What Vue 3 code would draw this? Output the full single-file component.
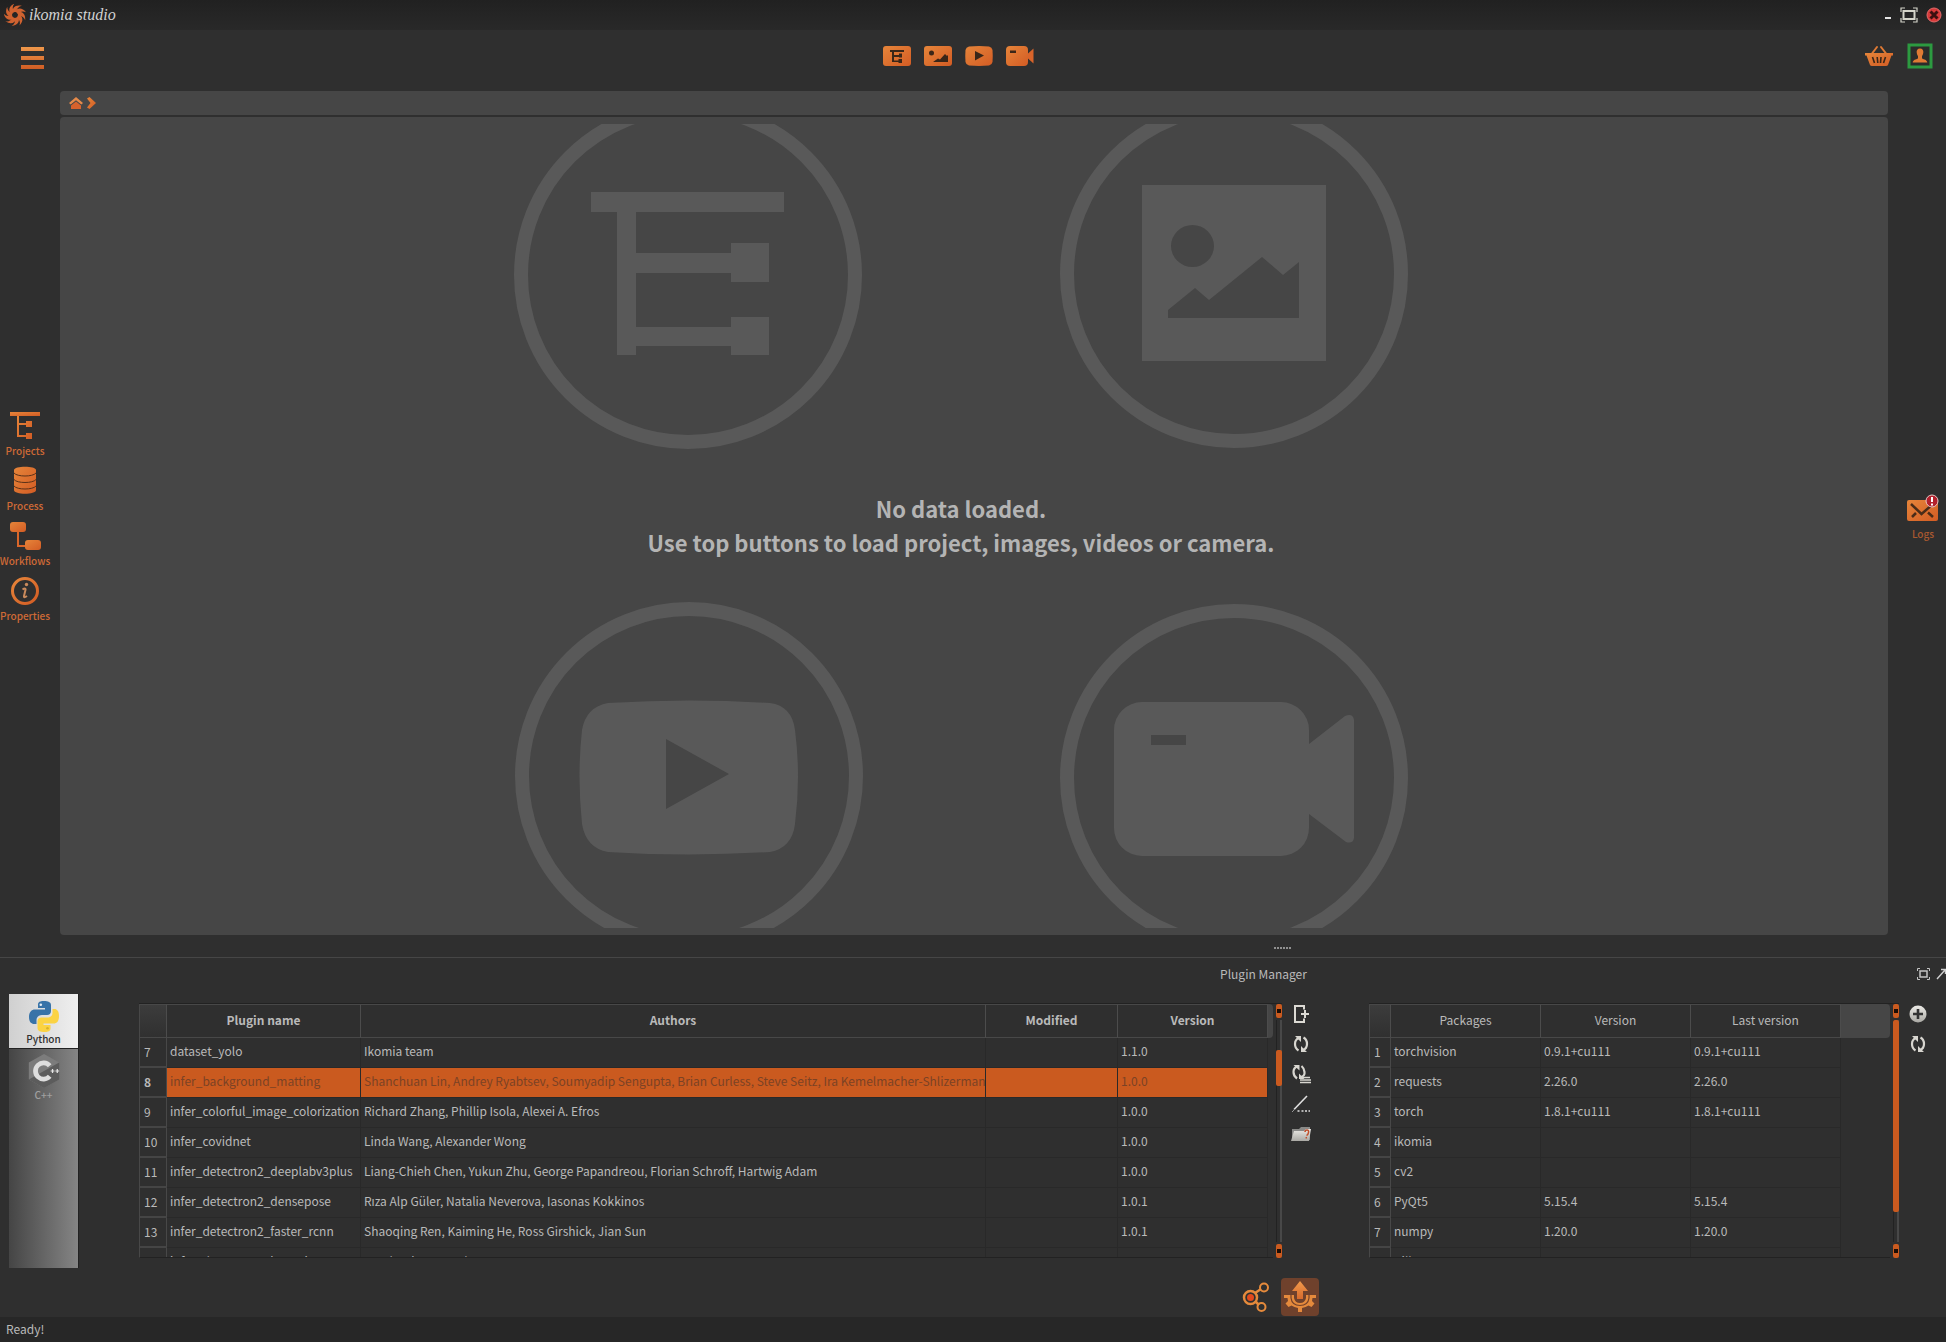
<script setup>
const loaders = [
  { id: 'project', label: 'Load project' },
  { id: 'image', label: 'Load images' },
  { id: 'video', label: 'Load videos' },
  { id: 'camera', label: 'Open camera' },
]

const docks = [
  { id: 'projects', label: 'Projects' },
  { id: 'process', label: 'Process' },
  { id: 'workflows', label: 'Workflows' },
  { id: 'properties', label: 'Properties' },
]

const plugins = [
  { n: 7, name: 'dataset_yolo', authors: 'Ikomia team', version: '1.1.0' },
  { n: 8, name: 'infer_background_matting', authors: 'Shanchuan Lin, Andrey Ryabtsev, Soumyadip Sengupta, Brian Curless, Steve Seitz, Ira Kemelmacher-Shlizerman', version: '1.0.0', selected: true },
  { n: 9, name: 'infer_colorful_image_colorization', authors: 'Richard Zhang, Phillip Isola, Alexei A. Efros', version: '1.0.0' },
  { n: 10, name: 'infer_covidnet', authors: 'Linda Wang, Alexander Wong', version: '1.0.0' },
  { n: 11, name: 'infer_detectron2_deeplabv3plus', authors: 'Liang-Chieh Chen, Yukun Zhu, George Papandreou, Florian Schroff, Hartwig Adam', version: '1.0.0' },
  { n: 12, name: 'infer_detectron2_densepose', authors: 'Rıza Alp Güler, Natalia Neverova, Iasonas Kokkinos', version: '1.0.1' },
  { n: 13, name: 'infer_detectron2_faster_rcnn', authors: 'Shaoqing Ren, Kaiming He, Ross Girshick, Jian Sun', version: '1.0.1' },
  { n: 14, name: 'infer_detectron2_keypoints', authors: 'Facebook Research', version: '1.0.0' },
]

const packages = [
  { n: 1, name: 'torchvision', version: '0.9.1+cu111', last: '0.9.1+cu111' },
  { n: 2, name: 'requests', version: '2.26.0', last: '2.26.0' },
  { n: 3, name: 'torch', version: '1.8.1+cu111', last: '1.8.1+cu111' },
  { n: 4, name: 'ikomia', version: '', last: '' },
  { n: 5, name: 'cv2', version: '', last: '' },
  { n: 6, name: 'PyQt5', version: '5.15.4', last: '5.15.4' },
  { n: 7, name: 'numpy', version: '1.20.0', last: '1.20.0' },
  { n: 8, name: 'Pillow', version: '8.3.2', last: '8.3.2' },
]

const blades = [0, 40, 80, 120, 160, 200, 240, 280, 320]
</script>

<template>
  <div class="app">
    <svg class="defs" aria-hidden="true">
      <defs>
        <linearGradient id="og" x1="0" y1="0" x2="1" y2="1">
          <stop offset="0" stop-color="#e6853a" />
          <stop offset="1" stop-color="#d35c24" />
        </linearGradient>
        <linearGradient id="ov" x1="0" y1="0" x2="0" y2="24" gradientUnits="userSpaceOnUse">
          <stop offset="0" stop-color="#f09a4c" />
          <stop offset="1" stop-color="#cf5a22" />
        </linearGradient>
        <linearGradient id="gy" x1="0" y1="0" x2="0" y2="1">
          <stop offset="0" stop-color="#eceae6" />
          <stop offset="1" stop-color="#aaa9a4" />
        </linearGradient>
      </defs>
    </svg>

    <header class="titlebar">
      <svg class="logo" viewBox="0 0 24 24" aria-hidden="true">
        <path v-for="a in blades" :key="a" :transform="`rotate(${a} 12 12)`" fill="#cf6230" d="M9.500 9.500C8.500 4 12.500 .2 19.500 2C15.800 2.600 13.800 5.200 13.600 9.200C12.400 8.600 11 8.600 9.500 9.500Z" />
      </svg>
      <span class="brand">ikomia studio</span>
      <div class="window-buttons">
        <button class="ib" aria-label="Minimize">
          <svg width="8" height="18" viewBox="0 0 8 18"><rect x="1" y="11" width="6" height="2" fill="#e4e4e4" /></svg>
        </button>
        <button class="ib" aria-label="Maximize">
          <svg width="18" height="16" viewBox="0 0 18 16" fill="none" stroke="#d4d4ca"><path d="M1 5V1H5M13 1H17V5M17 11V15H13M5 15H1V11" stroke-width="1.200" /><rect x="3.500" y="4" width="11" height="8" stroke-width="2" /></svg>
        </button>
        <button class="ib" aria-label="Close">
          <svg width="16" height="16" viewBox="0 0 16 16"><circle cx="8" cy="8" r="7" fill="#d83a3a" stroke="#e06a6a" /><path d="M4.500 4.500L11.500 11.500M11.500 4.500L4.500 11.500" stroke="#3b1010" stroke-width="3" /></svg>
        </button>
      </div>
    </header>

    <nav class="toolbar" aria-label="Main toolbar">
      <button class="ib menu" aria-label="Menu">
        <svg width="24" height="24" viewBox="0 0 24 24" fill="url(#ov)"><rect x="1" y="1" width="23" height="4" /><rect x="1" y="10" width="23" height="4" /><rect x="1" y="19" width="23" height="4" /></svg>
      </button>
      <div class="loaders">
        <button v-for="l in loaders" :key="l.id" class="ib" :aria-label="l.label">
          <svg width="29" height="22" viewBox="0 0 29 22">
            <template v-if="l.id === 'project'">
              <rect x="1" y="1" width="28" height="20" rx="3" fill="url(#og)" />
              <path d="M8 5H22V7H12V10H17V8.500H20V12.500H17V12H12V15.500H16.500V14H20V18H16.500V17H10V7H8Z" fill="#3a2618" />
            </template>
            <template v-else-if="l.id === 'image'">
              <rect x="1" y="1" width="28" height="20" rx="3" fill="url(#og)" />
              <circle cx="8.500" cy="8" r="2.500" fill="#3a2618" />
              <path d="M10 17L15 13.500L17 14.500L22 9L24 11L25 10V17Z" fill="#3a2618" />
            </template>
            <template v-else-if="l.id === 'video'">
              <path d="M5 1.400Q15 .6 25 1.400Q28 2 28.500 5Q29 11 28.500 17Q28 20 25 20.600Q15 21.400 5 20.600Q2 20 1.500 17Q1 11 1.500 5Q2 2 5 1.400Z" fill="url(#og)" />
              <path d="M11 6L20 10.500L11 15.500Z" fill="#3a2618" />
            </template>
            <template v-else>
              <rect x="1" y="1" width="22" height="20" rx="4" fill="url(#og)" />
              <path d="M23 8.500L28.500 3.500V18.500L23 13.500Z" fill="#d9642a" />
              <rect x="5" y="5.500" width="6" height="2.500" fill="#3a2618" />
            </template>
          </svg>
        </button>
      </div>
      <div class="account">
        <button class="ib" aria-label="Marketplace">
          <svg width="30" height="22" viewBox="0 0 30 22"><path d="M8 8.500L13 2M22 8.500L17 2" stroke="#e07a34" stroke-width="2" stroke-linecap="round" /><path fill="url(#og)" d="M1 8H29V10.500H27.500L24 20Q23.500 21 22 21H8Q6.500 21 6 20L2.500 10.500H1Z" /><path d="M8.500 12L10.500 18M13.200 12L13.800 18M17 12L16.500 18M21.500 12L19.500 18" stroke="#3a2618" stroke-width="1.600" /></svg>
        </button>
        <button class="ib" aria-label="Account">
          <svg width="26" height="26" viewBox="0 0 26 26"><rect x="2" y="2" width="22" height="22" fill="#2b2b2b" stroke="#2c9a40" stroke-width="3" /><path fill="#e07a34" d="M13 5.500C15.500 5.500 16.600 7.200 16.300 9.600C16.100 11.300 15.400 12.400 15 13.300V15.500C17 16.500 20 16.800 20.300 19.500H5.700C6 16.800 9 16.500 11 15.500V13.300C10.600 12.400 9.900 11.300 9.700 9.600C9.400 7.200 10.500 5.500 13 5.500Z" /></svg>
        </button>
      </div>
    </nav>

    <main class="workspace">
      <aside class="rail">
        <button v-for="d in docks" :key="d.id" class="rail-item">
          <svg width="34" height="32" viewBox="0 0 34 32" aria-hidden="true">
            <g v-if="d.id === 'projects'" fill="url(#og)">
              <rect x="2" y="3" width="30" height="4" />
              <path d="M9 7H11V14H18V12H24V18H18V16H11V26H18V24H24V30H18V28H9Z" />
            </g>
            <g v-else-if="d.id === 'process'">
              <path fill="url(#og)" d="M6 6C6 1.500 28 1.500 28 6V26C28 31 6 31 6 26Z" />
              <path d="M6 9C9 13 25 13 28 9M6 15.500C9 19.500 25 19.500 28 15.500M6 22C9 26 25 26 28 22" fill="none" stroke="#5a3118" />
            </g>
            <g v-else-if="d.id === 'workflows'">
              <path d="M10 11V27H18" fill="none" stroke="#d9662a" stroke-width="2" />
              <rect x="2" y="3" width="16" height="10" rx="3" fill="url(#og)" />
              <rect x="17" y="21" width="16" height="10" rx="3" fill="url(#og)" />
            </g>
            <g v-else>
              <circle cx="17" cy="17" r="12.500" fill="none" stroke="url(#og)" stroke-width="3" />
              <circle cx="18.500" cy="10.500" r="1.700" fill="#c98a5c" />
              <path d="M14.500 15.500Q17.500 13.500 17.600 15.500L16 22Q15.600 24.500 19 22" fill="none" stroke="#c98a5c" stroke-width="2" />
            </g>
          </svg>
          <span>{{ d.label }}</span>
        </button>
      </aside>

      <section class="center">
        <div class="crumbs">
          <button class="ib" aria-label="Home">
            <svg width="14" height="14" viewBox="0 0 14 14"><path fill="#e58a4a" d="M7 1L14 7L12.300 8.500L7 4.200L1.700 8.500L0 7Z" /><path fill="#d8622c" d="M7 5.500L12 9.500V13H2V9.500Z" /></svg>
          </button>
          <svg width="10" height="14" viewBox="0 0 10 14" aria-hidden="true"><path fill="url(#og)" d="M1 2.500L3.500 1L10 7L3.500 13L1 11.500L4.500 7Z" /></svg>
        </div>
        <div class="canvas">
          <div class="scene">
            <svg class="watermark" viewBox="0 0 1802 804" preserveAspectRatio="xMidYMid slice" aria-hidden="true">
              <g fill="none" stroke="#595959" stroke-width="14">
                <circle cx="628" cy="151" r="167" />
                <circle cx="1174" cy="150" r="167" />
                <circle cx="629" cy="652" r="167" />
                <circle cx="1174" cy="654" r="167" />
              </g>
              <g fill="#595959">
                <path d="M531 68H724V88H576V129H671V119H709V158H671V149H576V203H671V193H709V231H671V222H576V231H557V88H531Z" />
                <path fill-rule="evenodd" d="M1082 61H1266V237H1082ZM1132.500 101A21.500 21 0 1 0 1132.500 143A21.500 21 0 1 0 1132.500 101ZM1108 194V186L1135 164L1149 176L1202 133L1223 151L1239 138V194Z" />
                <path fill-rule="evenodd" d="M548 579Q629 574 710 579Q732 582 735 606Q741 652 735 700Q732 724 710 728Q629 733 548 728Q526 724 522 700Q517 652 522 606Q526 583 548 579ZM606 615V685L669 650Z" />
                <path fill-rule="evenodd" d="M1082 578H1221A28 28 0 0 1 1249 606V620L1285 592Q1293 589 1294 596V714Q1293 720 1286 718L1249 690V704A28 28 0 0 1 1221 732H1082A28 28 0 0 1 1054 704V606A28 28 0 0 1 1082 578ZM1091 611V621H1126V611Z" />
              </g>
            </svg>
            <p class="empty">No data loaded.<br />Use top buttons to load project, images, videos or camera.</p>
          </div>
        </div>
      </section>

      <aside class="rail right">
        <button class="rail-item logs">
          <svg width="34" height="32" viewBox="0 0 34 32" aria-hidden="true">
            <rect x="1" y="8" width="31" height="21" rx="2" fill="url(#og)" />
            <path d="M5 12L15.500 22L27 12M6 25L10 21M27 25L22 20.500" fill="none" stroke="#4a2c18" stroke-width="2.500" />
            <circle cx="26" cy="9" r="6" fill="#b3202c" stroke="#e8c8c8" />
            <path d="M26 5V10M26 11.500V13.500" stroke="#fff" stroke-width="2" />
          </svg>
          <span>Logs</span>
        </button>
      </aside>
    </main>

    <div class="splitter"><i v-for="i in 6" :key="i"></i></div>

    <section class="dock">
      <div class="dock-title">
        <h2>Plugin Manager</h2>
        <div class="dock-buttons">
          <button class="ib" aria-label="Maximize panel">
            <svg width="13" height="12" viewBox="0 0 13 12" fill="none" stroke="#c4c4c4"><path d="M.5 3V.5H3M10 .5H12.500V3M12.500 9V11.500H10M3 11.500H.5V9" /><rect x="3" y="3" width="7" height="6" stroke-width="1.500" /></svg>
          </button>
          <button class="ib" aria-label="Detach panel">
            <svg width="10" height="12" viewBox="0 0 10 12" fill="none" stroke="#d0d0d0"><path d="M1 11L9 2M5 1.500H9.500V6" stroke-width="1.400" /></svg>
          </button>
        </div>
      </div>

      <div class="dock-body">
        <div class="languages">
          <button class="lang active">
            <svg width="34" height="34" viewBox="0 0 34 34" aria-hidden="true">
              <path fill="#3873a8" d="M17 2C11 2 11 4.500 11 6V9H18V10.500H8C4.500 10.500 2 13 2 18C2 23 4.500 25 7 25H9.500V21C9.500 18 12 16 15 16H20C22.500 16 24 14.500 24 12V6C24 3 21 2 17 2Z" />
              <circle cx="13.800" cy="5.800" r="1.300" fill="#e8eef4" />
              <path fill="#fbd343" d="M17.500 33C23.500 33 23.500 30.500 23.500 29V26H16.500V24.500H26.500C30 24.500 32 22 32 17C32 12 30 10 27.500 10H25.500V14C25.500 17 23 18.500 20 18.500H14.500C12 18.500 10.500 20 10.500 22.500V29C10.500 32 13.500 33 17.500 33Z" />
              <circle cx="20.500" cy="29.200" r="1.300" fill="#d9b22a" />
            </svg>
            <span>Python</span>
          </button>
          <button class="lang">
            <svg width="34" height="36" viewBox="0 0 34 38" aria-hidden="true">
              <path fill="#7c7c7c" d="M17 1L33 10V28L17 37L1 28V10Z" />
              <path fill="#5c5c5c" d="M33 10V28L17 37L1 28L17 19Z" />
              <path d="M23 13.500A8.500 8.500 0 1 0 23 24.500" fill="none" stroke="#dedede" stroke-width="5" />
              <path d="M24 19H28M26 17V21M29 19H33M31 17V21" stroke="#e6e6e6" stroke-width="1.300" />
            </svg>
            <span>C++</span>
          </button>
        </div>

        <div class="grid plugins">
          <div class="viewport">
            <table>
              <colgroup><col class="c-num" /><col class="c-name" /><col /><col class="c-mod" /><col class="c-mid" /><col class="c-fill" /></colgroup>
              <thead>
                <tr><td class="corner"></td><th scope="col">Plugin name</th><th scope="col">Authors</th><th scope="col">Modified</th><th scope="col">Version</th><td class="filler"></td></tr>
              </thead>
              <tbody>
                <tr v-for="p in plugins" :key="p.n" :class="{ selected: p.selected }">
                  <th scope="row">{{ p.n }}</th><td>{{ p.name }}</td><td>{{ p.authors }}</td><td></td><td>{{ p.version }}</td><td class="blank"></td>
                </tr>
              </tbody>
            </table>
          </div>
          <div class="scroll"><b></b><div class="track"><i class="thumb short"></i></div><b></b></div>
        </div>

        <div class="tools">
          <button class="ib" aria-label="New plugin">
            <svg width="18" height="18" viewBox="0 0 18 18" fill="none" stroke="#dcdad4" stroke-width="2"><path d="M12 4.500V1H3V17H12V13.500M9 9H17M13 5V13" /></svg>
          </button>
          <button class="ib" aria-label="Refresh">
            <svg width="18" height="18" viewBox="0 0 18 18"><path d="M7 3Q3 4.500 3 9T6.500 15.500M11 15Q15 13.500 15 9T11.500 2.500" fill="none" stroke="#d8d6d0" stroke-width="2.200" /><path fill="#d8d6d0" d="M3 1H9V7ZM15 17H9V11Z" /></svg>
          </button>
          <button class="ib" aria-label="Update all">
            <svg width="20" height="20" viewBox="0 0 20 20"><path d="M6 2.500Q2.500 4 2.500 8T6 14.500M10 13Q14 12 13.500 8T10.500 2" fill="none" stroke="#d8d6d0" stroke-width="2.200" /><path fill="#d8d6d0" d="M2.500 1H8.500V6.500ZM13.500 15H8V9.500Z" /><path d="M11 13.500H19M9 16H20M9 18.500H20" stroke="#d8d6d0" stroke-width="1.400" /></svg>
          </button>
          <button class="ib" aria-label="Edit plugin">
            <svg width="18" height="18" viewBox="0 0 18 18"><path d="M2 14.500L15 1" stroke="#e0e0e0" stroke-width="1.600" /><path d="M0 17L3 14" stroke="#999" /><path d="M5.500 16H7.500M9.500 16H11.500M13 16H15M16.500 16H18" stroke="#e0e0e0" stroke-width="1.600" /></svg>
          </button>
          <button class="ib" aria-label="Open plugin folder">
            <svg width="20" height="16" viewBox="0 0 20 16"><path fill="#8a8a88" d="M1 3H8L10 1H19V14H1Z" /><path fill="url(#gy)" d="M3 5H13L15 3H20L18 15H0Z" /><path d="M14 6Q14 4 16 4T17.500 6.500T15.500 9.500M15.300 11V12.500" fill="none" stroke="#c0502c" stroke-width="1.500" /></svg>
          </button>
        </div>

        <div class="grid packages">
          <div class="viewport">
            <table>
              <colgroup><col class="c-idx" /><col class="c-mid" /><col class="c-mid" /><col class="c-mid" /><col /></colgroup>
              <thead>
                <tr><td class="corner"></td><th scope="col">Packages</th><th scope="col">Version</th><th scope="col">Last version</th><td class="filler"></td></tr>
              </thead>
              <tbody>
                <tr v-for="p in packages" :key="p.n">
                  <th scope="row">{{ p.n }}</th><td>{{ p.name }}</td><td>{{ p.version }}</td><td>{{ p.last }}</td><td class="blank"></td>
                </tr>
              </tbody>
            </table>
          </div>
          <div class="scroll"><b></b><div class="track"><i class="thumb long"></i></div><b></b></div>
        </div>

        <div class="tools">
          <button class="ib" aria-label="Install package">
            <svg width="18" height="18" viewBox="0 0 18 18"><circle cx="9" cy="9" r="8.500" fill="url(#gy)" /><path d="M9 4V14M4 9H14" stroke="#333" stroke-width="2.600" /></svg>
          </button>
          <button class="ib" aria-label="Update package">
            <svg width="18" height="18" viewBox="0 0 18 18"><path d="M7 3Q3 4.500 3 9T6.500 15.500M11 15Q15 13.500 15 9T11.500 2.500" fill="none" stroke="#d8d6d0" stroke-width="2.200" /><path fill="#d8d6d0" d="M3 1H9V7ZM15 17H9V11Z" /></svg>
          </button>
        </div>
      </div>

      <div class="tabs">
        <button class="tab" aria-label="Workflow">
          <svg width="28" height="30" viewBox="0 0 28 30" fill="none" stroke="#e58a3c"><path d="M13 11L19 7M13 19L17 23" stroke-width="2.500" /><circle cx="8.500" cy="15.500" r="6.500" stroke-width="2.500" /><circle cx="8.500" cy="15.500" r="3.500" fill="#e2491c" stroke="none" /><circle cx="22" cy="5.500" r="4" stroke-width="2" /><circle cx="19.500" cy="25" r="4" stroke-width="2" /></svg>
        </button>
        <button class="tab active" aria-label="Plugin manager">
          <svg width="34" height="32" viewBox="0 0 34 32"><path fill="url(#ov)" d="M17 0L25 10H20V18H14V10H9Z" /><path fill="#e58a3c" d="M1 14H11V17Q12 22 17 22T23 17V14H33V17H29.500L29 20L31.500 22.500L28.500 26L25.500 24.500L22.500 26L19 27V31H15V27L11.500 26L8.500 24.500L5.500 26L2.500 22.500L5 20L4.500 17H1Z" /><path d="M8 14V17Q9 24.500 17 24.500T26 17V14" fill="none" stroke="#74412a" stroke-width="1.200" /></svg>
        </button>
      </div>
    </section>

    <footer class="status" role="status">Ready!</footer>
  </div>
</template>

<style>
body {
  background: #2f2f2f;
}
</style>

<style scoped>
.app {
  display: flex;
  flex-direction: column;
  min-height: 100vh;
  background: #2f2f2f;
  color: #bababa;
  font-family: "Noto Sans CJK SC", "Noto Sans", sans-serif;
  font-size: 12px;
  line-height: 20px;
  overflow: hidden;
}
.app * {
  box-sizing: border-box;
}
.defs {
  position: absolute;
  width: 0;
  height: 0;
}
svg {
  display: block;
  flex: none;
}
button {
  border: 0;
  padding: 0;
  margin: 0;
  background: none;
  color: inherit;
  font: inherit;
}
.ib {
  display: block;
  flex: none;
}

.titlebar {
  display: flex;
  align-items: center;
  gap: 3px;
  height: 30px;
  padding: 0 4px;
  background: linear-gradient(#212121, #292929);
}
.logo {
  width: 22px;
  height: 22px;
}
.brand {
  font-family: "Liberation Serif", serif;
  font-style: italic;
  font-size: 16px;
  color: #d2d2d2;
}
.window-buttons {
  display: flex;
  align-items: center;
  gap: 8px;
  margin-left: auto;
}

.toolbar {
  display: grid;
  grid-template-columns: 1fr auto 1fr;
  align-items: center;
  height: 53px;
  padding: 0 13px 2px 20px;
}
.menu {
  padding-top: 4px;
}
.loaders {
  display: flex;
  gap: 12px;
  padding-right: 38px;
}
.account {
  display: flex;
  align-items: center;
  justify-content: flex-end;
  gap: 13px;
}

.workspace {
  display: flex;
  flex: 1;
  padding-top: 8px;
  min-height: 500px;
}
.rail {
  display: flex;
  flex: none;
  flex-direction: column;
  justify-content: center;
  width: 60px;
  padding: 12px 10px 0 0;
}
.rail.right {
  align-items: flex-end;
  width: 58px;
  padding-right: 0;
}
.rail-item {
  display: flex;
  flex-direction: column;
  align-items: center;
  height: 55px;
  font-size: 10px;
  font-weight: 500;
  line-height: 18px;
  color: #cf6a36;
}
.rail-item span {
  margin-top: 1px;
}
.logs {
  width: 46px;
  color: #a9592f;
}
.center {
  display: flex;
  flex: 1;
  flex-direction: column;
  gap: 2px;
  min-width: 0;
}
.crumbs {
  display: flex;
  align-items: center;
  gap: 3px;
  height: 24px;
  padding: 0 9px;
  border-radius: 4px;
  background: #464646;
}
.canvas {
  display: flex;
  flex: 1;
  padding: 7px 26px 7px 0;
  border-radius: 4px;
  background: #464646;
}
.scene {
  position: relative;
  display: flex;
  flex: 1;
  align-items: center;
  justify-content: center;
  overflow: hidden;
}
.watermark {
  position: absolute;
  inset: 0;
  width: 100%;
  height: 100%;
}
.empty {
  position: relative;
  margin: 0;
  padding-bottom: 3px;
  font-size: 22px;
  font-weight: 700;
  line-height: 34px;
  text-align: center;
  color: #b4b4b4;
}

.splitter {
  display: flex;
  justify-content: center;
  align-items: center;
  gap: 1px;
  height: 23px;
  padding: 4px 0 0 618px;
  border-bottom: 1px solid #464646;
}
.splitter i {
  width: 2px;
  height: 2px;
  background: #909090;
}

.dock-title {
  display: flex;
  align-items: center;
  height: 34px;
  padding: 0 0 2px 618px;
}
.dock-title h2 {
  flex: 1;
  margin: 0;
  font-size: 12px;
  font-weight: 400;
  text-align: center;
}
.dock-buttons {
  display: flex;
  align-items: center;
  gap: 6px;
  padding-left: 8px;
}
.dock-body {
  display: flex;
  align-items: flex-start;
  padding: 2px 19px 0 9px;
}
.languages {
  display: flex;
  flex: none;
  flex-direction: column;
  width: 70px;
  height: 274px;
  margin-right: 60px;
  background: linear-gradient(90deg, #454545, #858585);
  border-right: 1px solid #222;
}
.lang {
  display: flex;
  flex-direction: column;
  align-items: center;
  padding-top: 4px;
  height: 56px;
  font-size: 10px;
  font-weight: 500;
  line-height: 12px;
  color: #a0a0a0;
}
.lang.active {
  height: 55px;
  padding-top: 5px;
  border-bottom: 1px solid #222;
  background: linear-gradient(90deg, #d0d0d0, #efefef);
  color: #303030;
}

.grid {
  display: flex;
  gap: 2px;
  height: 255px;
  margin-top: 9px;
  border-top: 1px solid #222;
}
.plugins {
  flex: 1;
  min-width: 0;
}
.packages {
  flex: none;
  width: 530px;
  margin-left: 59px;
}
.viewport {
  flex: 1;
  min-width: 0;
  overflow: hidden;
  border-left: 1px solid #484848;
  border-bottom: 1px solid #222;
}
table {
  width: 100%;
  table-layout: fixed;
  border-collapse: separate;
  border-spacing: 0;
}
.c-num {
  width: 27px;
}
.c-idx {
  width: 21px;
}
.c-name {
  width: 194px;
}
.c-mid {
  width: 150px;
}
.c-mod {
  width: 132px;
}
.c-fill {
  width: 5px;
}
td,
th {
  height: 30px;
  padding: 0 0 3px 3px;
  overflow: hidden;
  white-space: nowrap;
  text-align: left;
  font-weight: 400;
  border-right: 1px solid #292929;
  border-bottom: 1px solid #292929;
}
thead td,
thead th {
  height: 34px;
  padding: 0 0 2px;
  text-align: center;
  border: 0;
  border-top: 1px solid #484848;
  border-bottom: 1px solid #484848;
  border-right: 1px solid #4c4c4c;
}
.plugins thead th {
  font-weight: 700;
}
thead .corner {
  background: linear-gradient(#3c3c3c, #303030);
}
thead .filler {
  background: #464646;
  border-radius: 0 4px 4px 0;
  border: 0;
}
tbody th {
  padding: 0 0 0 4px;
  border-right: 1px solid #484848;
  border-bottom: 2px solid #454545;
}
tbody .blank {
  border: 0;
}
.selected td:not(.blank) {
  background: #ca5a1f;
  color: #7b4225;
}
.selected th {
  font-weight: 700;
}

.scroll {
  display: flex;
  flex: none;
  flex-direction: column;
  align-items: center;
  gap: 2px;
  width: 7px;
}
.scroll b {
  width: 6px;
  height: 14px;
  border: 1px solid #ca5a1f;
  border-width: 5px 1px;
  border-radius: 2px;
  background: #1c0d05;
}
.track {
  flex: 1;
  width: 6px;
  border-left: 1px solid #222;
  border-right: 2px solid #484848;
}
.thumb {
  display: block;
  width: 6px;
  margin-left: -1px;
  border-radius: 2px;
  background: #ca5a1f;
}
.thumb.short {
  height: 36px;
  position: relative;
  top: 30px;
}
.thumb.long {
  height: 192px;
}

.tools {
  display: flex;
  flex: none;
  flex-direction: column;
  width: 18px;
  margin: 5px 0 0 10px;
}
.tools .ib {
  display: flex;
  align-items: center;
  justify-content: center;
  width: 18px;
  height: 30px;
}

.tabs {
  display: flex;
  align-items: center;
  justify-content: center;
  gap: 6px;
  height: 49px;
  padding: 8px 0 0 610px;
}
.tab {
  display: flex;
  align-items: center;
  justify-content: center;
  width: 38px;
  height: 38px;
  border-radius: 4px;
}
.tab.active {
  background: #6f412c;
}
.status {
  height: 25px;
  padding: 0 6px;
  background: #272727;
  line-height: 24px;
}
</style>
